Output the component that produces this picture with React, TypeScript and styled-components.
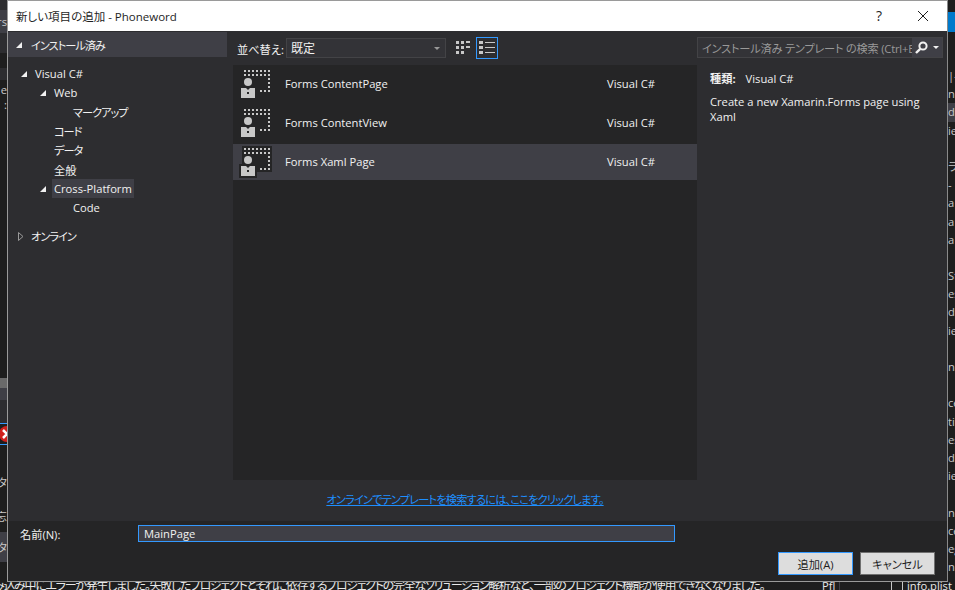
import React from 'react'
import styled, { createGlobalStyle } from 'styled-components'

const GlobalStyle = createGlobalStyle`
  html, body {
    margin: 0;
    padding: 0;
    background: #1e1e1e;
  }
  * {
    box-sizing: border-box;
  }
`

const font = `"Open Sans", "Noto Sans CJK JP", sans-serif`

const Desktop = styled.div`
  width: 955px;
  height: 590px;
  overflow: hidden;
  display: grid;
  grid-template-columns: 7px 941px 7px;
  grid-template-rows: 582px 8px;
  background: #1e1e1e;
  font-family: ${font};
  font-size: 11.2px;
  font-feature-settings: 'palt';
  color: #f1f1f1;
`

// --- what is left visible of the IDE behind the dialog ---
const LeftStrip = styled.div`
  display: flex;
  flex-direction: column;
  overflow: hidden;
`
const Band = styled.div<{ $h: number; $bg?: string; $edge?: boolean }>`
  height: ${(p) => p.$h}px;
  flex: none;
  background: ${(p) => p.$bg || 'transparent'};
  display: flex;
  align-items: center;
  justify-content: flex-end;
  white-space: nowrap;
  color: #c8c8c8;
  ${(p) => (p.$edge ? 'border-top: 1px solid #3399ff; border-bottom: 1px solid #3399ff;' : '')}
`
const ErrorBadge = styled.svg`
  flex: none;
  margin-right: -7px;
`
const RightStrip = styled.div`
  display: flex;
  flex-direction: column;
  overflow: hidden;
  padding-top: 12px;
`
const BlueTab = styled.div`
  height: 20px;
  margin-bottom: 35px;
  background: #007acc;
  flex: none;
`
const StripLine = styled.div<{ $on?: boolean }>`
  height: 18.2px;
  line-height: 18.2px;
  flex: none;
  white-space: nowrap;
  color: #c8c8c8;
  background: ${(p) => (p.$on ? '#3f3f46' : 'transparent')};
`
const StatusLine = styled.div`
  grid-column: 1 / 4;
  height: 8px;
  overflow: hidden;
  display: flex;
  align-items: center;
  white-space: nowrap;
  line-height: 14px;
  color: #e8e8e8;
  background: #1e1e1e;
`
const StatusText = styled.span`
  margin-left: -7px;
  width: 829px;
  flex: none;
  overflow: hidden;
  font-size: 12px;
  letter-spacing: -1.3px;
`
const StatusCell = styled.span`
  width: 18px;
  margin-right: 51px;
  flex: none;
  border-right: 1px solid #3f3f46;
`
const StatusBox = styled.span`
  width: 12px;
  height: 14px;
  border: 1px solid #c8c8c8;
  margin-right: 4px;
  flex: none;
`

// --- dialog ---
const Dialog = styled.div`
  border: 1px solid #9a9a9a;
  border-right-color: #8a8a8a;
  display: flex;
  flex-direction: column;
  background: #2d2d30;
  min-width: 0;
  overflow: hidden;
`
const TitleBar = styled.div`
  height: 30px;
  flex: none;
  background: #fff;
  color: #1e1e1e;
  display: flex;
  align-items: center;
  padding: 0 2px 1px 8px;
`
const TitleText = styled.div`
  flex: 1;
  font-size: 11.5px;
`
const TitleButton = styled.div`
  width: 44px;
  height: 29px;
  display: flex;
  align-items: center;
  justify-content: center;
  font-size: 14px;
  color: #1e1e1e;
`
const Body = styled.div`
  flex: 1;
  min-height: 0;
  display: grid;
  grid-template-columns: 219px 6px 464px 1fr;
`
const LeftPane = styled.div`
  display: flex;
  flex-direction: column;
  padding-top: 1px;
`
const PaneHeader = styled.div`
  height: 25px;
  background: #3f3f46;
  display: flex;
  align-items: center;
  gap: 1px;
  padding-left: 8px;
`
const Kana = styled.span`
  letter-spacing: -1px;
`
const Tree = styled.ul`
  list-style: none;
  margin: 0;
  padding: 7px 0 0;
`
const TreeRow = styled.li<{ $depth: number }>`
  height: 19.2px;
  display: flex;
  align-items: center;
  padding-left: ${(p) => 13 + p.$depth * 19}px;
`
const Arrow = styled.svg`
  width: 6px;
  height: 6px;
  flex: none;
  margin-right: 8px;
`
const CollapsedArrow = styled(Arrow)`
  height: 9px;
  margin-right: 7px;
`
const ArrowSlot = styled.span`
  width: 14px;
  flex: none;
`
const TreeLabel = styled.span<{ $selected?: boolean }>`
  padding: 0 2px;
  margin-left: -2px;
  height: 19px;
  line-height: 19px;
  background: ${(p) => (p.$selected ? '#3f3f46' : 'transparent')};
`
const OnlineRow = styled.div`
  margin-top: 9px;
  height: 19px;
  display: flex;
  align-items: center;
  padding-left: 10px;
`
const Spacer = styled.div``
const MiddlePane = styled.div`
  display: flex;
  flex-direction: column;
`
const Toolbar = styled.div`
  height: 34px;
  flex: none;
  display: flex;
  align-items: center;
  padding-left: 4px;
`
const SortLabel = styled.span`
  width: 49px;
  flex: none;
  padding-top: 1px;
  white-space: nowrap;
`
const Select = styled.div`
  width: 160px;
  height: 20px;
  background: #333337;
  border: 1px solid #434346;
  display: flex;
  align-items: center;
  justify-content: space-between;
  padding: 0 5px 0 4px;
  font-size: 12px;
`
const Caret = styled.span`
  width: 0;
  height: 0;
  border-left: 3px solid transparent;
  border-right: 3px solid transparent;
  border-top: 3px solid #999;
`
const ViewButton = styled.div<{ $active?: boolean }>`
  width: 22px;
  height: 22px;
  margin-left: ${(p) => (p.$active ? 2 : 6)}px;
  display: flex;
  align-items: center;
  justify-content: center;
  border: 1px solid ${(p) => (p.$active ? '#3399ff' : 'transparent')};
`
const TemplateList = styled.div`
  height: 415px;
  flex: none;
  background: #252526;
  padding-top: 1px;
  display: flex;
  flex-direction: column;
  gap: 3px;
`
const TemplateRow = styled.div<{ $selected?: boolean }>`
  height: 36px;
  flex: none;
  display: grid;
  grid-template-columns: 52px 322px 1fr;
  align-items: center;
  padding-bottom: 1px;
  background: ${(p) => (p.$selected ? '#3f3f46' : 'transparent')};
`
const IconCell = styled.svg`
  width: 32px;
  height: 32px;
  margin-left: 7px;
  margin-top: 1px;
  overflow: visible;
`
const LinkArea = styled.div`
  flex: 1;
  display: flex;
  align-items: center;
  justify-content: center;
  padding-bottom: 3px;
`
const OnlineLink = styled.a`
  color: #1e8fff;
  text-decoration: underline;
  letter-spacing: -0.8px;
  cursor: pointer;
`
const RightPane = styled.div`
  display: flex;
  flex-direction: column;
`
const SearchBar = styled.div`
  margin-top: 6px;
  width: 246px;
  height: 21px;
  background: #333337;
  border: 1px solid #434346;
  display: flex;
  align-items: center;
`
const SearchInput = styled.div`
  flex: 1;
  min-width: 0;
  overflow: hidden;
  white-space: nowrap;
  color: #999;
  padding-left: 4px;
  letter-spacing: -0.2px;
`
const SearchButton = styled.div`
  width: 30px;
  height: 19px;
  flex: none;
  background: #3f3f46;
  display: flex;
  align-items: center;
  gap: 5px;
  padding-left: 3px;
`
const SearchCaret = styled(Caret)`
  border-top-color: #f1f1f1;
`
const Details = styled.div`
  padding: 12px 13px 0;
`
const KindRow = styled.div`
  display: flex;
  gap: 10px;
  line-height: 18px;
`
const KindLabel = styled.span`
  font-weight: 700;
`
const Description = styled.p`
  margin: 6px 0 0;
  line-height: 15px;
  width: 215px;
`
const Footer = styled.div`
  height: 60px;
  flex: none;
  background: #252526;
  padding: 4px 12px 0;
  display: flex;
  flex-direction: column;
`
const NameRow = styled.div`
  display: flex;
  align-items: center;
`
const NameLabel = styled.label`
  width: 118px;
  flex: none;
`
const NameInput = styled.div`
  width: 537px;
  height: 17px;
  background: #3f3f46;
  border: 1px solid #3399ff;
  display: flex;
  align-items: center;
  padding-left: 5px;
`
const ButtonRow = styled.div`
  margin-top: 10px;
  display: flex;
  justify-content: flex-end;
  gap: 7px;
`
const DialogButton = styled.button<{ $primary?: boolean }>`
  width: 75px;
  height: 23px;
  padding: 0;
  background: #dddddd;
  color: #1e1e1e;
  font-family: ${font};
  font-size: 11.2px;
  font-feature-settings: 'palt';
  border: 1px solid ${(p) => (p.$primary ? '#3399ff' : '#707070')};
`

const Expanded = () => (
  <Arrow viewBox="0 0 6 6">
    <polygon points="6,0 6,6 0,6" fill="#f1f1f1" />
  </Arrow>
)
const Collapsed = () => (
  <CollapsedArrow viewBox="0 0 6 9">
    <polygon points="0.5,0.5 5,4.5 0.5,8.5" fill="none" stroke="#999" />
  </CollapsedArrow>
)

const PageIcon = ({ selected }: { selected?: boolean }) => (
  <IconCell viewBox="0 0 32 32">
    {selected && (
      <g fill="#252526">
        <rect x="2" y="0" width="30" height="26" />
        <rect x="-1" y="18" width="18" height="14" />
      </g>
    )}
    <g fill="#c8c8c8">
      {[4, 8, 12, 16, 20, 24, 28].map((x) => (
        <React.Fragment key={x}>
          <rect x={x} y="2" width="2" height="2" />
          <rect x={x} y="6" width="2" height="2" />
        </React.Fragment>
      ))}
      {[10, 14, 18].map((y) => (
        <rect key={y} x="28" y={y} width="2" height="2" />
      ))}
      {[20, 24, 28].map((x) => (
        <rect key={x} x={x} y="22" width="2" height="2" />
      ))}
      <circle cx="8" cy="14" r="4" />
      <path d="M1 20h5l2 2 2-2h5v10H1z" />
    </g>
    <rect x="7" y="24" width="2" height="2" fill="#252526" />
  </IconCell>
)

const templates = [
  { name: 'Forms ContentPage' },
  { name: 'Forms ContentView' },
  { name: 'Forms Xaml Page', selected: true },
]

const rightLines = [
  '|—', 'no', 'd', 'ie', '', 'ラ', '-', 'a', 'a', 'a', '', 'St', 'es', 'd.', 'ie', '',
  'ne', '', 'ce', 'ti', 'es', 'd.', 'ie', '', 'ne', 'ce', 'eg', 'ne',
]

export default function App() {
  return (
    <>
      <GlobalStyle />
      <Desktop>
        <LeftStrip>
          <Band $h={10} $bg="#2d2d30" />
          <Band $h={23} $bg="#3f3f46">rs</Band>
          <Band $h={20} $bg="#2d2d30" />
          <Band $h={15} $bg="#1e1e1e" />
          <Band $h={12} $bg="#2d2d30" />
          <Band $h={18}>e</Band>
          <Band $h={12}>:</Band>
          <Band $h={268} />
          <Band $h={10} $bg="#6a6a6a" />
          <Band $h={12} $bg="#3f3f46" />
          <Band $h={23} $bg="#2d2d30" />
          <Band $h={22} $edge>
            <ErrorBadge width="14" height="18" viewBox="0 0 14 18">
              <circle cx="7" cy="9" r="8" fill="#d0201c" />
              <path d="M3 5l8 8M11 5l-8 8" stroke="#fff" strokeWidth="2.5" />
            </ErrorBadge>
          </Band>
          <Band $h={28} />
          <Band $h={18}>タ</Band>
          <Band $h={16} />
          <Band $h={18}>忘</Band>
          <Band $h={7} />
          <Band $h={30} $bg="#3f3f46">タ</Band>
        </LeftStrip>

        <Dialog>
          <TitleBar>
            <TitleText>新しい項目の追加 - Phoneword</TitleText>
            <TitleButton>?</TitleButton>
            <TitleButton>
              <svg width="12" height="12" viewBox="0 0 12 12">
                <path d="M1 1l10 10M11 1L1 11" stroke="#1e1e1e" strokeWidth="1" fill="none" />
              </svg>
            </TitleButton>
          </TitleBar>

          <Body>
            <LeftPane>
              <PaneHeader>
                <Expanded />
                <Kana>インストール済み</Kana>
              </PaneHeader>
              <Tree>
                <TreeRow $depth={0}><Expanded />Visual C#</TreeRow>
                <TreeRow $depth={1}><Expanded />Web</TreeRow>
                <TreeRow $depth={2}><ArrowSlot /><Kana>マークアップ</Kana></TreeRow>
                <TreeRow $depth={1}><ArrowSlot /><Kana>コード</Kana></TreeRow>
                <TreeRow $depth={1}><ArrowSlot /><Kana>データ</Kana></TreeRow>
                <TreeRow $depth={1}><ArrowSlot />全般</TreeRow>
                <TreeRow $depth={1}><Expanded /><TreeLabel $selected>Cross-Platform</TreeLabel></TreeRow>
                <TreeRow $depth={2}><ArrowSlot />Code</TreeRow>
              </Tree>
              <OnlineRow>
                <Collapsed />
                <Kana>オンライン</Kana>
              </OnlineRow>
            </LeftPane>

            <Spacer />

            <MiddlePane>
              <Toolbar>
                <SortLabel>並べ替え:</SortLabel>
                <Select>
                  既定
                  <Caret />
                </Select>
                <ViewButton>
                  <svg width="14" height="14" viewBox="0 0 14 14" fill="#c8c8c8">
                    <path d="M0 0h3v3H0zM5 0h3v3H5zM10 0h4v2h-4zM0 5h3v3H0zM5 5h3v3H5zM10 5h4v2h-4zM0 10h3v3H0zM5 10h3v3H5z" />
                  </svg>
                </ViewButton>
                <ViewButton $active>
                  <svg width="16" height="14" viewBox="0 0 16 14" fill="#c8c8c8">
                    <path d="M0 0h4v3H0zM6 1h10v1H6zM0 5h4v3H0zM6 6h10v1H6zM0 10h4v3H0zM6 11h10v1H6z" />
                  </svg>
                </ViewButton>
              </Toolbar>
              <TemplateList>
                {templates.map((t) => (
                  <TemplateRow key={t.name} $selected={t.selected}>
                    <PageIcon selected={t.selected} />
                    <span>{t.name}</span>
                    <span>Visual C#</span>
                  </TemplateRow>
                ))}
              </TemplateList>
              <LinkArea>
                <OnlineLink>オンラインでテンプレートを検索するには、ここをクリックします。</OnlineLink>
              </LinkArea>
            </MiddlePane>

            <RightPane>
              <SearchBar>
                <SearchInput>インストール済み テンプレート の検索 (Ctrl+E)</SearchInput>
                <SearchButton>
                  <svg width="13" height="13" viewBox="0 0 13 13" fill="none" stroke="#f1f1f1" strokeWidth="2">
                    <circle cx="8" cy="5" r="3.6" />
                    <path d="M5.2 7.8L1 12" strokeWidth="2.4" />
                  </svg>
                  <SearchCaret />
                </SearchButton>
              </SearchBar>
              <Details>
                <KindRow>
                  <KindLabel>種類:</KindLabel>
                  <span>Visual C#</span>
                </KindRow>
                <Description>Create a new Xamarin.Forms page using Xaml</Description>
              </Details>
            </RightPane>
          </Body>

          <Footer>
            <NameRow>
              <NameLabel htmlFor="name">名前(N):</NameLabel>
              <NameInput id="name">MainPage</NameInput>
            </NameRow>
            <ButtonRow>
              <DialogButton $primary>追加(A)</DialogButton>
              <DialogButton>キャンセル</DialogButton>
            </ButtonRow>
          </Footer>
        </Dialog>

        <RightStrip>
          <BlueTab />
          {rightLines.map((l, i) => (
            <StripLine key={i} $on={i === 2}>{l}</StripLine>
          ))}
        </RightStrip>

        <StatusLine>
          <StatusText>み込み中にエラーが発生しました。失敗したプロジェクトとそれに依存するプロジェクトの完全なソリューション解析など、一部のプロジェクト機能が使用できなくなりました。</StatusText>
          <StatusCell>Pfl</StatusCell>
          <StatusBox />
          <span>info.plist</span>
        </StatusLine>
      </Desktop>
    </>
  )
}
